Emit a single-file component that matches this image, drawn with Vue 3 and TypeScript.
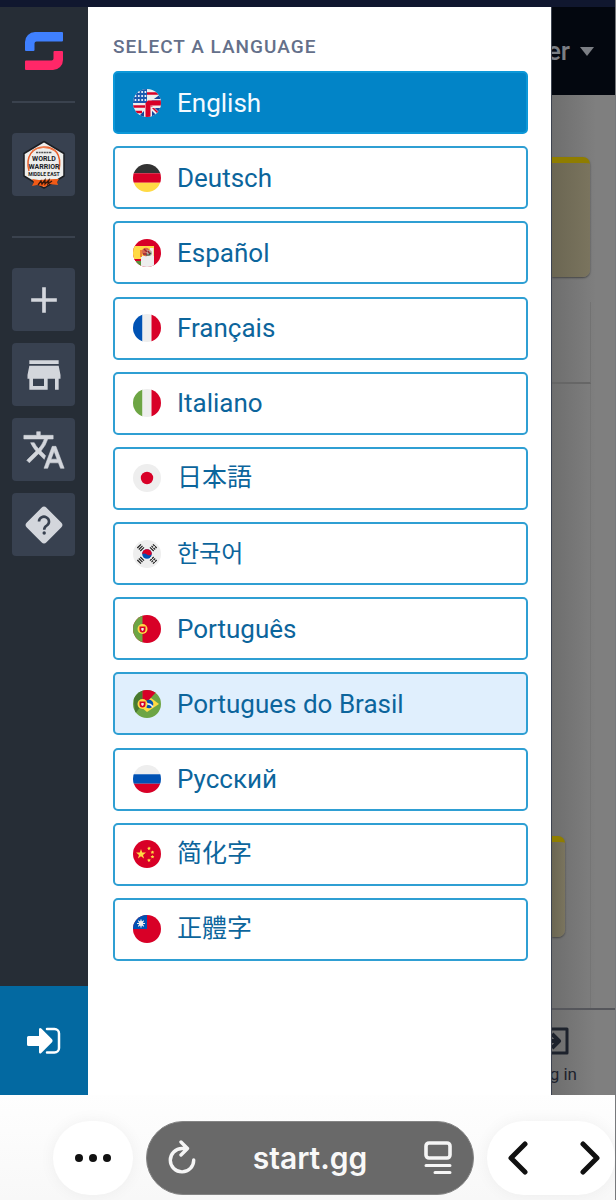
<script setup lang="ts">
import { ref } from 'vue'

interface Language {
  flag: string
  label: string
  lang: string
}

const languages: Language[] = [
  { flag: 'en', label: 'English', lang: 'en' },
  { flag: 'de', label: 'Deutsch', lang: 'de' },
  { flag: 'es', label: 'Español', lang: 'es' },
  { flag: 'fr', label: 'Français', lang: 'fr' },
  { flag: 'it', label: 'Italiano', lang: 'it' },
  { flag: 'jp', label: '日本語', lang: 'ja' },
  { flag: 'kr', label: '한국어', lang: 'ko' },
  { flag: 'pt', label: 'Português', lang: 'pt' },
  { flag: 'br', label: 'Portugues do Brasil', lang: 'pt-BR' },
  { flag: 'ru', label: 'Русский', lang: 'ru' },
  { flag: 'cn', label: '简化字', lang: 'zh-Hans' },
  { flag: 'tw', label: '正體字', lang: 'zh-Hant' },
]

const selected = ref('en')
const highlighted = ref('br')
</script>

<template>
  <div class="screen">
    <div class="status"></div>
    <div class="app">
      <nav class="rail" aria-label="Main">
        <div class="rail-top">
          <a class="logo" href="#" aria-label="Home">
            <svg width="38" height="38" viewBox="0 0 38 38">
              <path d="M10 0H37a1 1 0 0 1 1 1V8.500a1 1 0 0 1-1 1H11.500a2 2 0 0 0-2 2V18a1 1 0 0 1-1 1H1a1 1 0 0 1-1-1V10A10 10 0 0 1 10 0Z" fill="#3f80ff" />
              <path d="M28 38H1a1 1 0 0 1-1-1V29.500a1 1 0 0 1 1-1H26.500a2 2 0 0 0 2-2V20a1 1 0 0 1 1-1H37a1 1 0 0 1 1 1V28A10 10 0 0 1 28 38Z" fill="#ff2768" />
            </svg>
          </a>
          <hr class="rule" />
          <button class="tile" aria-label="World Warrior Middle East">
            <svg width="46" height="50" viewBox="0 0 46 50">
              <path d="M23 1.500 43 13.500V36L23 48 3 36V13.500Z" fill="#eeeeec" stroke="#1b1e23" stroke-width="1.500" stroke-linejoin="round" />
              <path d="M8 31C4 16 12 7 23 7S41 14 38 30" fill="none" stroke="#e8602c" stroke-width="1.500" />
              <path d="M11 11Q22 4 34 11" fill="none" stroke="#f08050" stroke-width="1" />
              <path d="M15 12.500h16" stroke="#555" stroke-width="1.500" stroke-dasharray="2 .6" />
              <text class="badge-big" x="23" y="21" text-anchor="middle">WORLD</text>
              <text class="badge-big" x="23" y="29" text-anchor="middle">WARRIOR</text>
              <text class="badge-small" x="23" y="36" text-anchor="middle">MIDDLE EAST</text>
              <path d="M11 39l7 1 16-1 4 0-2 3 1 3-9-1-4 3-8-2-5 1 2-4Z" fill="#f25a16" />
              <path d="M17 45l3-4 1 3 3-4v4l4-4-1 4 4-3" fill="none" stroke="#36170b" stroke-width="1.300" />
            </svg>
          </button>
          <hr class="rule rule-low" />
          <div class="tiles">
            <button class="tile" aria-label="Create">
              <svg width="44" height="44" viewBox="0 0 24 24"><path d="M19 13h-6v6h-2v-6H5v-2h6V5h2v6h6Z" /></svg>
            </button>
            <button class="tile" aria-label="Store">
              <svg width="44" height="44" viewBox="0 0 24 24"><path d="M20 4H4v2h16V4zm1 10v-2l-1-5H4l-1 5v2h1v6h10v-6h4v6h2v-6h1zm-9 4H6v-4h6v4z" /></svg>
            </button>
            <button class="tile" aria-label="Language">
              <svg width="44" height="44" viewBox="0 0 24 24"><path d="M12.870 15.070l-2.540-2.510.030-.030A17.520 17.520 0 0 0 14.070 6H17V4h-7V2H8v2H1v1.990h11.170C11.500 7.920 10.440 9.750 9 11.350 8.070 10.320 7.300 9.190 6.690 8h-2c.730 1.630 1.730 3.170 2.980 4.560l-5.090 5.020L4 19l5-5 3.110 3.110.760-2.040zM18.500 10h-2L12 22h2l1.120-3h4.750L21 22h2l-4.500-12zm-2.620 7l1.620-4.330L19.120 17h-3.240z" stroke="#d3d6dc" stroke-width=".3" /></svg>
            </button>
            <button class="tile" aria-label="Help">
              <svg width="38" height="38" viewBox="0 0 38 38">
                <path d="M16.500 1.800 1.800 16.500a3.500 3.500 0 0 0 0 5L16.500 36.200a3.500 3.500 0 0 0 5 0L36.200 21.500a3.500 3.500 0 0 0 0-5L21.500 1.800a3.500 3.500 0 0 0-5 0Z" />
                <path d="M14 15.500a5 4.800 0 1 1 7.800 4c-2 1.300-2.600 2-2.600 4.200" fill="none" stroke="#384150" stroke-width="2.600" />
                <circle cx="19.200" cy="27" r="1.700" fill="#384150" />
              </svg>
            </button>
          </div>
        </div>
        <a class="login" href="#" aria-label="Log in">
          <svg width="34" height="28" viewBox="0 0 34 28">
            <path d="M1.500 9H12V2.500c0-1.600 1.300-2 2.300-1L25 12.300c.8.900.8 2 0 2.900L14.300 26c-1 1-2.300.5-2.300-1V19H1.500A1.500 1.500 0 0 1 0 17.500v-7A1.500 1.500 0 0 1 1.500 9Z" fill="#fff" />
            <path d="M20 2h7.500A4.500 4.500 0 0 1 32 6.500V21a4.500 4.500 0 0 1-4.500 4.500H20" fill="none" stroke="#fff" stroke-width="2.500" stroke-linecap="round" />
          </svg>
        </a>
      </nav>

      <section class="panel">
        <h2 class="title">SELECT A LANGUAGE</h2>
        <div class="list">
          <button
            v-for="item in languages"
            :key="item.flag"
            class="choice"
            :class="{ selected: selected === item.flag, highlighted: highlighted === item.flag }"
            :lang="item.lang"
            @click="selected = item.flag"
          >
            <svg class="flag" width="28" height="28" viewBox="0 0 28 28" aria-hidden="true">
              <g v-if="item.flag === 'en'">
                <path fill="#eee" d="M0 0h28v28H0z" />
                <path fill="#1a5ab0" d="M0 0h14v14H0z" />
                <g fill="#fff">
                  <circle v-for="n in 12" :key="n" :cx="2.500 + ((n - 1) % 4) * 3.300" :cy="3 + Math.floor((n - 1) / 4) * 4" r="1" />
                </g>
                <path stroke="#d80027" stroke-width="2.500" d="M14 4.500h11M0 17.500h12M0 23h9" />
                <path fill="#16479c" d="M28 5v7H18Z" /><path fill="#16479c" d="M28 18v10H18V18Z" /><path fill="#16479c" d="M11 22v6H5Z" />
                <path stroke="#eee" stroke-width="4" d="M17 17 28 28" /><path stroke="#d80027" stroke-width="1.600" d="M18 17 28 27" />
                <path fill="#eee" d="M14 10h14v1.500H14zM18 17.500h10V19H18zM17.500 18H19v10h-1.500z" />
                <path fill="#d80027" d="M12.500 14 15 11.500H28v5H17.500V28h-5Z" />
              </g>
              <g v-else-if="item.flag === 'de'">
                <path fill="#333" d="M0 0h28v9.300H0z" /><path fill="#d80027" d="M0 9.300h28v9.400H0z" /><path fill="#ffda44" d="M0 18.700h28V28H0z" />
              </g>
              <g v-else-if="item.flag === 'es'">
                <path fill="#d80027" d="M0 0h28v28H0z" />
                <path fill="#ffda44" d="M0 7h21v13H0z" />
                <path fill="#eee" d="M8 17h13v11H8z" /><path fill="#eee" d="M17 9h3.500v12H17z" />
                <path fill="#58913c" d="M3 21.500h5V28H3z" /><path fill="#d80027" d="M1 20h7v2H1z" />
                <path fill="#ef8434" d="M7 11h2v7H7z" />
                <circle cx="13" cy="13" r="4.200" fill="#d8674e" /><circle cx="16" cy="14" r="3" fill="#b9aaa0" />
                <path stroke="#9c2630" stroke-width="1.400" d="M11 10l3 3M10 15h4M15 12l2 3" /><path stroke="#37614d" stroke-width="1.200" fill="none" d="M13 16h3l2-2" />
              </g>
              <g v-else-if="item.flag === 'fr' || item.flag === 'it'">
                <path :fill="item.flag === 'fr' ? '#0052b4' : '#6da544'" d="M0 0h9.500v28H0z" /><path fill="#eee" d="M9.500 0h9v28h-9z" /><path fill="#d80027" d="M18.500 0H28v28h-9.500z" />
              </g>
              <g v-else-if="item.flag === 'jp'">
                <path fill="#eee" d="M0 0h28v28H0z" /><circle cx="14" cy="14" r="6.200" fill="#d80027" />
              </g>
              <g v-else-if="item.flag === 'kr'">
                <path fill="#eee" d="M0 0h28v28H0z" />
                <circle cx="14" cy="14" r="4.800" fill="#0052b4" />
                <path fill="#d80027" d="M9.200 14a4.800 4.800 0 0 1 9.600 0c-1.200 1.600-3.400 1.600-4.800.4s-3.600-1.200-4.800-.4Z" />
                <path stroke="#222" stroke-width="1.200" d="M4.300 8 8 4.300M5.800 9.500l3.700-3.700M7.300 11 11 7.300M20 4.300 23.700 8M18.500 5.800l3.700 3.700M17 7.300l3.700 3.700M4.300 20 8 23.700M5.800 18.500l3.700 3.700M7.300 17l3.700 3.700M20 23.700l3.700-3.700M18.500 22.200l3.700-3.700M17 20.700l3.700-3.700" />
                <path stroke="#eee" stroke-width=".8" d="M17 17l6 6M19.500 8.500l3-3" />
              </g>
              <g v-else-if="item.flag === 'pt'">
                <path fill="#d80027" d="M0 0h28v28H0z" /><path fill="#6da544" d="M0 0h9.500v28H0z" />
                <circle cx="9.500" cy="14" r="5" fill="#ffda44" /><path fill="#d80027" d="M6.500 11.500h6v3a3 3 0 0 1-6 0Z" /><path fill="#eee" d="M8.300 13h2.400v2l-1.200 1-1.200-1Z" />
              </g>
              <g v-else-if="item.flag === 'br'">
                <path fill="#6da544" d="M0 0h28v28H0z" /><path fill="#49792f" d="M0 0h9.500v14L2 24Z" /><path fill="#d80027" d="M9.500 0H25L9.500 17Z" />
                <path fill="#ffda44" d="m18 8 8 6-12 8-6-5Z" />
                <circle cx="16" cy="14" r="4.300" fill="#0052b4" /><path fill="none" stroke="#eee" stroke-width="1.400" d="M12 14q5-1 8 3" />
                <circle cx="9.500" cy="14" r="5" fill="#ffda44" /><path fill="#d80027" d="M6.500 11.500h6v3a3 3 0 0 1-6 0Z" /><path fill="#eee" d="M8.300 13h2.400v2l-1.200 1-1.200-1Z" />
              </g>
              <g v-else-if="item.flag === 'ru'">
                <path fill="#eee" d="M0 0h28v9.300H0z" /><path fill="#0052b4" d="M0 9.300h28v9.400H0z" /><path fill="#d80027" d="M0 18.700h28V28H0z" />
              </g>
              <g v-else-if="item.flag === 'cn'">
                <path fill="#d80027" d="M0 0h28v28H0z" />
                <path fill="#ffda44" d="m8 9 1.200 3.600H13l-3 2.300 1.100 3.600L8 16.300l-3.100 2.200L6 14.900l-3-2.300h3.800Z" />
                <path fill="#ffda44" d="m16 6.600.6 1 1.200.1-.8 1 .2 1.100-1.200-.4-1 .6v-1.200l-1-.9 1.300-.2ZM19.500 10.500l.6 1 1.200.1-.8 1 .2 1.100-1.200-.4-1 .6v-1.200l-1-.9 1.300-.2ZM19.500 15l.6 1 1.200.1-.8 1 .2 1.100-1.200-.4-1 .6v-1.200l-1-.9 1.300-.2ZM16 18.500l.6 1 1.200.1-.8 1 .2 1.100-1.200-.4-1 .6v-1.200l-1-.9 1.300-.2Z" />
              </g>
              <g v-else>
                <path fill="#d80027" d="M0 0h28v28H0z" /><path fill="#0052b4" d="M0 0h14v14H0z" />
                <path stroke="#eee" stroke-width="1.200" d="M8 4.500v8M4 8.500h8M5.200 5.700l5.600 5.600M10.800 5.700l-5.600 5.600" /><circle cx="8" cy="8.500" r="2.400" fill="#eee" />
              </g>
            </svg>
            <span>{{ item.label }}</span>
          </button>
        </div>
      </section>

      <aside class="page">
        <header class="page-head">
          <span>er</span>
          <svg width="14" height="9" viewBox="0 0 14 9"><path d="M0 0h14L7 9Z" fill="#7b7e84" /></svg>
        </header>
        <div class="page-body">
          <div class="note"></div>
          <div class="block"></div>
          <div class="column"><div class="note note-small"></div></div>
        </div>
        <footer class="page-foot">
          <svg width="28" height="28" viewBox="0 0 28 28" fill="none" stroke="#1d222c" stroke-width="3" stroke-linejoin="round">
            <path d="M2 8V2h24v24H2v-6" /><path d="M0 14h18M11 7l7 7-7 7" stroke-width="4" />
          </svg>
          <span>g in</span>
        </footer>
      </aside>
    </div>

    <div class="browser">
      <button class="pill more" aria-label="More">
        <svg width="36" height="8" viewBox="0 0 36 8"><circle cx="4" cy="4" r="4" /><circle cx="18" cy="4" r="4" /><circle cx="32" cy="4" r="4" /></svg>
      </button>
      <div class="address">
        <button class="plain" aria-label="Reload">
          <svg width="28" height="36" viewBox="0 0 28 36" fill="none" stroke="#f5f5f5" stroke-width="3.400" stroke-linecap="round" stroke-linejoin="round">
            <path d="M18 8.500H14A11.700 11.700 0 1 0 25.700 20M13 2l6.500 6.500L13 15" />
          </svg>
        </button>
        <span class="host">start.gg</span>
        <button class="plain" aria-label="Page menu">
          <svg width="28" height="34" viewBox="0 0 28 34" fill="none" stroke="#f5f5f5" stroke-width="3" stroke-linecap="round">
            <rect x="2" y="2" width="24" height="15" rx="3" stroke-width="3.600" /><path d="M2 24.500h24M11 31.500h15" />
          </svg>
        </button>
      </div>
      <div class="pill history">
        <button class="plain" aria-label="Back">
          <svg width="20" height="34" viewBox="0 0 20 34"><path d="M17 3 3 17l14 14" /></svg>
        </button>
        <button class="plain" aria-label="Forward">
          <svg width="20" height="34" viewBox="0 0 20 34"><path d="M3 3l14 14L3 31" /></svg>
        </button>
      </div>
    </div>
  </div>
</template>

<style>
body {
  margin: 0;
  background: #fdfdfd;
}
</style>

<style scoped>
.screen {
  display: flex;
  flex-direction: column;
  min-height: 100vh;
  box-sizing: border-box;
  overflow: hidden;
  border-right: 1px solid #77797c;
  font-family: Roboto, "Noto Sans CJK JP", sans-serif;
}
.screen *,
.screen *::before {
  box-sizing: border-box;
}
button {
  padding: 0;
  border: 0;
  background: none;
  font: inherit;
  color: inherit;
}
svg {
  display: block;
  flex: none;
}
.status {
  height: 7px;
  background: #10172f;
}
.app {
  display: grid;
  grid-template-columns: 88px 1fr 63px;
  flex: 1;
}
.rail {
  display: flex;
  flex-direction: column;
  justify-content: space-between;
  background: linear-gradient(#262d36 97%, #1c222b);
}
.rail-top {
  display: flex;
  flex-direction: column;
  padding: 25px 13px 0 12px;
}
.logo {
  align-self: center;
}
.rule {
  width: 100%;
  height: 2px;
  margin: 31px 0 30px;
  border: 0;
  background: #3a424e;
}
.rule-low {
  margin: 40px 0 30px;
}
.tiles {
  display: flex;
  flex-direction: column;
  gap: 12px;
}
.tile {
  display: flex;
  align-items: center;
  justify-content: center;
  width: 100%;
  height: 63px;
  border-radius: 4px;
  background: #384150;
  fill: #d3d6dc;
}
.badge-big {
  font: 700 7px Roboto, sans-serif;
  fill: #202226;
}
.badge-small {
  font: 700 5px Roboto, sans-serif;
  fill: #202226;
}
.login {
  display: flex;
  align-items: center;
  justify-content: center;
  height: 109px;
  background: #0369a1;
}
.panel {
  padding: 28px 23px 0 25px;
  border-right: 1px solid #3d4350;
  background: #fff;
}
.title {
  margin: 0 0 12px;
  font-size: 19px;
  line-height: 24px;
  font-weight: 500;
  letter-spacing: 1px;
  color: #64708a;
}
.list {
  display: flex;
  flex-direction: column;
  justify-content: space-between;
  min-height: 890px;
}
.choice {
  display: flex;
  align-items: center;
  gap: 16px;
  height: 63px;
  padding: 0 18px;
  border: 2px solid #2f9fd3;
  border-radius: 5px;
  background: #fff;
  color: #0c659c;
  font-size: 26px;
  line-height: 32px;
  text-align: left;
}
.choice:lang(ja) {
  font-size: 25px;
}
.choice:lang(ko) {
  font-family: Roboto, "Noto Sans CJK KR", sans-serif;
  font-size: 24px;
}
.choice:lang(zh-Hans) {
  font-family: Roboto, "Noto Sans CJK SC", sans-serif;
  font-size: 25px;
}
.choice:lang(zh-Hant) {
  font-family: Roboto, "Noto Sans CJK TC", sans-serif;
  font-size: 25px;
}
.highlighted {
  background: #e0effd;
}
.selected {
  border-color: #0d98d8;
  background: #0284c7;
  color: #f4faff;
}
.flag {
  border-radius: 50%;
  overflow: hidden;
}
.page {
  display: flex;
  flex-direction: column;
  overflow: hidden;
  background: linear-gradient(90deg, #6e6e6e, #7f7f7f 70%);
}
.page-head {
  display: flex;
  align-items: center;
  justify-content: flex-end;
  gap: 10px;
  height: 88px;
  padding-right: 21px;
  background: #03070f;
  color: #7b7e84;
  font-size: 26px;
  font-weight: 500;
}
.page-body {
  flex: 1;
}
.note {
  height: 120px;
  margin: 62px 25px 0 0;
  border-top: 6px solid #8f7d00;
  border-radius: 0 7px 7px 0;
  background: linear-gradient(90deg, #6b6652, #7a745e);
  box-shadow: 0 1px 2px #444;
}
.block {
  height: 82px;
  margin: 25px 24px 0 0;
  border-right: 1px solid #727272;
  border-bottom: 2px solid #666;
}
.column {
  height: 624px;
  margin-right: 24px;
  padding-top: 452px;
  border-right: 1px solid #757575;
}
.note-small {
  height: 101px;
  margin: 0 25px 0 0;
}
.page-foot {
  display: flex;
  flex-direction: column;
  align-items: flex-end;
  gap: 8px;
  height: 87px;
  padding: 17px 38px 0 0;
  border-top: 2px solid #55565b;
  color: #1d222c;
  font-size: 17px;
  line-height: 22px;
  white-space: nowrap;
}
.page-foot svg {
  margin-right: 8px;
}
.browser {
  display: flex;
  gap: 13px;
  height: 105px;
  padding: 26px 0 5px 53px;
  background: linear-gradient(#fefefe, #f8f8f8);
}
.pill {
  display: flex;
  align-items: center;
  border-radius: 38px;
  background: #fff;
  box-shadow: 0 0 16px rgba(0, 0, 0, 0.05);
}
.more {
  justify-content: center;
  width: 80px;
  fill: #111;
}
.address {
  display: flex;
  flex: 1;
  align-items: center;
  justify-content: space-between;
  padding: 0 21px;
  border: 1px solid #858585;
  border-radius: 38px;
  background: #696969;
}
.plain {
  padding-bottom: 1px;
}
.host {
  color: #f8f8f8;
  font-family: Inter, sans-serif;
  font-size: 30px;
  line-height: 36px;
  font-weight: 600;
}
.history {
  justify-content: space-between;
  width: 128px;
  padding: 0 15px 0 21px;
}
.history svg {
  fill: none;
  stroke: #111;
  stroke-width: 5;
  stroke-linecap: round;
  stroke-linejoin: round;
}
</style>
